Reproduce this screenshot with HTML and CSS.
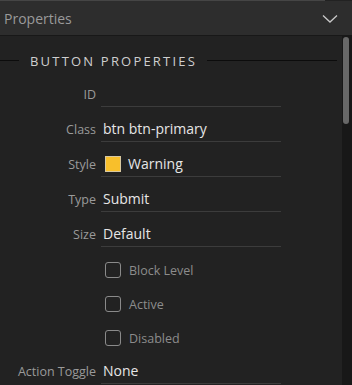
FILE: index.html
```html
<!DOCTYPE html>
<html lang="en">
<head>
    <meta charset="UTF-8">
    <title>Properties</title>
    <link rel="stylesheet" href="styles.css">
</head>
<body>
    <div class="topStrip"></div>
    <div class="header">
        <span class="header_title">Properties</span>
        <svg class="chevron" width="16" height="10" viewBox="0 0 16 10">
            <polyline points="1,1.5 8,8 15,1.5" fill="none" stroke="#c8c8c8" stroke-width="1.3"/>
        </svg>
    </div>
    <div class="panel">
        <div class="content">
            <div class="section">
                <span class="section_line left"></span>
                <span class="section_title">BUTTON PROPERTIES</span>
                <span class="section_line right"></span>
            </div>
            <div class="row">
                <label class="row_label">ID</label>
                <div class="row_value"></div>
            </div>
            <div class="row">
                <label class="row_label">Class</label>
                <div class="row_value">btn btn-primary</div>
            </div>
            <div class="row">
                <label class="row_label">Style</label>
                <div class="row_value"><span class="swatch"></span>Warning</div>
            </div>
            <div class="row">
                <label class="row_label">Type</label>
                <div class="row_value">Submit</div>
            </div>
            <div class="row">
                <label class="row_label">Size</label>
                <div class="row_value">Default</div>
            </div>
            <div class="check"><span class="check_box"></span>Block Level</div>
            <div class="check"><span class="check_box"></span>Active</div>
            <div class="check"><span class="check_box"></span>Disabled</div>
            <div class="row">
                <label class="row_label">Action Toggle</label>
                <div class="row_value">None</div>
            </div>
        </div>
        <div class="scrollbar">
            <div class="scrollbar_thumb"></div>
        </div>
    </div>
</body>
</html>
```

FILE: styles.css
```css
html, body{
    margin:0;
    padding:0;
    height:100%;
    overflow:hidden;
    background:#222222;
    font-family:"Open Sans", "Noto Sans", sans-serif;
}
.topStrip{
    height:1px;
    width:325px;
    background:#454545;
}
.header{
    height:34px;
    background:#2d2d2d;
    border-bottom:1px solid #181818;
    display:flex;
    align-items:center;
    justify-content:space-between;
    padding:0 14px 0 4px;
}
.header_title{
    color:#9a9a9a;
    font-size:14px;
}
.chevron{
    display:block;
    margin-top:1px;
}
.panel{
    display:flex;
    height:349px;
}
.content{
    flex:1;
    background:#222222;
}
.scrollbar{
    width:8px;
    background:#181818;
    padding:1px 1px 0 1px;
}
.scrollbar_thumb{
    width:6px;
    height:87px;
    background:#686868;
    border-radius:3px;
}
.section{
    display:flex;
    align-items:center;
    height:23px;
    margin-top:13px;
}
.section_line{
    height:1px;
    background:#0c0c0c;
}
.section_line.left{
    width:19px;
}
.section_line.right{
    width:130px;
}
.section_title{
    color:#cfcfcf;
    font-size:13px;
    letter-spacing:2.2px;
    padding:0 10px 0 11px;
}
.row{
    display:flex;
    align-items:flex-end;
    height:35px;
}
.row_label{
    width:101px;
    text-align:right;
    color:#9a9a9a;
    font-size:12.5px;
    padding-right:5px;
    padding-bottom:4px;
    box-sizing:border-box;
}
.row_value{
    width:180px;
    height:26px;
    box-sizing:border-box;
    border-bottom:1px solid #3c3c3c;
    color:#e6e6e6;
    font-size:14px;
    padding-left:2px;
    display:flex;
    align-items:center;
}
.swatch{
    width:14px;
    height:14px;
    background:#f8bf2b;
    border:1px solid #d8c8a0;
    margin:0 7px 0 2px;
}
.check{
    height:34px;
    box-sizing:border-box;
    padding-top:12px;
    display:flex;
    align-items:center;
    padding-left:105px;
    color:#8c8c8c;
    font-size:12.5px;
}
.check_box{
    width:14px;
    height:14px;
    border:1px solid #8a8a8a;
    border-radius:3px;
    margin-right:8px;
}
```
